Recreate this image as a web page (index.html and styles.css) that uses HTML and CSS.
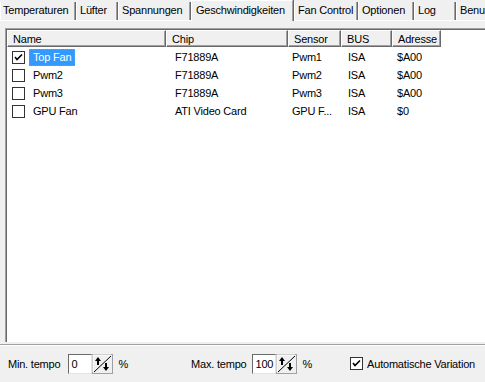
FILE: index.html
```html
<!DOCTYPE html>
<html lang="de">
<head>
    <meta charset="UTF-8">
    <title>Geschwindigkeiten</title>
    <link rel="stylesheet" href="styles.css">
</head>
<body>

    <div class="tabs">
        <div class="tab t-temp">Temperaturen</div>
        <div class="tab t-fan">Lüfter</div>
        <div class="tab t-volt">Spannungen</div>
        <div class="tab t-speed active">Geschwindigkeiten</div>
        <div class="tab t-ctrl">Fan Control</div>
        <div class="tab t-opt">Optionen</div>
        <div class="tab t-log">Log</div>
        <div class="tab t-user">Benutzer</div>
    </div>

    <div class="page">
        <!-- Fan list -->
        <div class="listview">
            <div class="header">
                <div class="col c-name">Name</div>
                <div class="col c-chip">Chip</div>
                <div class="col c-sensor">Sensor</div>
                <div class="col c-bus">BUS</div>
                <div class="col c-addr">Adresse</div>
            </div>
            <div id="rows" class="rows"></div>
        </div>

        <!-- Speed controls -->
        <div class="controls">
            <span class="lbl">Min. tempo</span>
            <div class="spin">
                <div class="spin-input">0</div>
                <svg class="spin-btn" width="21" height="20" viewBox="0 0 21 20">
                    <rect x="0.5" y="0.5" width="20" height="19" fill="#f0f0f0" stroke="#a0a0a0"/>
                    <line x1="1" y1="1" x2="19" y2="1" stroke="#fff"/>
                    <line x1="1" y1="1" x2="1" y2="18" stroke="#fff"/>
                    <line x1="2" y1="18" x2="19" y2="2" stroke="#000"/>
                    <path d="M6 3 L9 7 L7 7 L7 11 L5 11 L5 7 L3 7 Z" fill="#000"/>
                    <path d="M14 17 L17 13 L15 13 L15 9 L13 9 L13 13 L11 13 Z" fill="#000"/>
                </svg>
            </div>
            <span class="pct">%</span>

            <span class="lbl max">Max. tempo</span>
            <div class="spin">
                <div class="spin-input">100</div>
                <svg class="spin-btn" width="21" height="20" viewBox="0 0 21 20">
                    <rect x="0.5" y="0.5" width="20" height="19" fill="#f0f0f0" stroke="#a0a0a0"/>
                    <line x1="1" y1="1" x2="19" y2="1" stroke="#fff"/>
                    <line x1="1" y1="1" x2="1" y2="18" stroke="#fff"/>
                    <line x1="2" y1="18" x2="19" y2="2" stroke="#000"/>
                    <path d="M6 3 L9 7 L7 7 L7 11 L5 11 L5 7 L3 7 Z" fill="#000"/>
                    <path d="M14 17 L17 13 L15 13 L15 9 L13 9 L13 13 L11 13 Z" fill="#000"/>
                </svg>
            </div>
            <span class="pct">%</span>

            <span class="check-label">
                <svg class="box" width="13" height="13" viewBox="0 0 13 13">
                    <rect x="0.5" y="0.5" width="12" height="12" fill="#fff" stroke="#333"/>
                    <path d="M3 6 L5 8.5 L10 3.5" fill="none" stroke="#000" stroke-width="1.6"/>
                </svg>
                <span>Automatische Variation</span>
            </span>
        </div>

        <div class="debug">
            <svg class="box" width="13" height="13" viewBox="0 0 13 13">
                <rect x="0.5" y="0.5" width="12" height="12" fill="#a0a0a0" stroke="#808080"/>
            </svg>
            <span>Debug</span>
        </div>
    </div>

    <script>
        const fans = [
            { name: "Top Fan", chip: "F71889A", sensor: "Pwm1", bus: "ISA", addr: "$A00", on: true },
            { name: "Pwm2", chip: "F71889A", sensor: "Pwm2", bus: "ISA", addr: "$A00", on: false },
            { name: "Pwm3", chip: "F71889A", sensor: "Pwm3", bus: "ISA", addr: "$A00", on: false },
            { name: "GPU Fan", chip: "ATI Video Card", sensor: "GPU F...", bus: "ISA", addr: "$0", on: false },
        ];

        function checkBox(on) {
            const tick = on ? '<path d="M3 6 L5 8.5 L10 3.5" fill="none" stroke="#000" stroke-width="1.6"/>' : '';
            return `<svg class="box" width="13" height="13" viewBox="0 0 13 13">
                <rect x="0.5" y="0.5" width="12" height="12" fill="#fff" stroke="#333"/>${tick}</svg>`;
        }

        // Build the list rows
        function displayFans() {
            const rows = document.getElementById('rows');
            rows.innerHTML = '';
            fans.forEach((fan, i) => {
                rows.innerHTML += `
                    <div class="row">
                        <div class="cell c-name">${checkBox(fan.on)}<span class="${i === 0 ? 'sel' : 'txt'}">${fan.name}</span></div>
                        <div class="cell c-chip">${fan.chip}</div>
                        <div class="cell c-sensor">${fan.sensor}</div>
                        <div class="cell c-bus">${fan.bus}</div>
                        <div class="cell c-addr">${fan.addr}</div>
                    </div>
                `;
            });
        }

        displayFans();
    </script>
</body>
</html>
```

FILE: styles.css
```css
body {
    font-family: "Liberation Sans", Arial, sans-serif;
    font-size: 11px;
    letter-spacing: -0.2px;
    background-color: #f0f0f0;
    color: #000;
    margin: 0;
    width: 485px;
    height: 382px;
    overflow: hidden;
}

.tabs {
    display: flex;
    height: 21px;
    align-items: flex-end;
    white-space: nowrap;
    border-bottom: 1px solid #fff;
    box-sizing: border-box;
}

.tab {
    flex: none;
    height: 18px;
    line-height: 17px;
    padding-left: 3px;
    border-left: 1px solid #fff;
    border-right: 1px solid #a0a0a0;
    box-shadow: 1px 0 0 #696969;
    margin-right: 1px;
    box-sizing: border-box;
    overflow: hidden;
}

.t-temp { width: 75px; padding-left: 2px; }
.t-fan { width: 41px; }
.t-volt { width: 72px; }
.t-speed { width: 102px; }
.t-ctrl { width: 63px; }
.t-opt { width: 55px; }
.t-log { width: 41px; }
.t-user { width: 40px; }

.tab.active {
    height: 21px;
    line-height: 18px;
    margin-bottom: -1px;
    background-color: #f0f0f0;
    border-top: 1px solid #fff;
    padding-left: 4px;
}

.page {
    padding: 7px 0 0 5px;
}

.listview {
    width: 490px;
    height: 314px;
    background-color: #fff;
    border-top: 1px solid #a0a0a0;
    border-left: 1px solid #a0a0a0;
    box-shadow: inset 1px 1px 0 #696969;
    box-sizing: border-box;
    padding: 1px 0 0 1px;
}

.header {
    display: flex;
    height: 17px;
}

.header .col {
    height: 17px;
    line-height: 16px;
    padding-left: 5px;
    background-color: #f0f0f0;
    border-top: 1px solid #fff;
    border-left: 1px solid #fff;
    border-right: 1px solid #696969;
    border-bottom: 1px solid #696969;
    box-shadow: inset -1px -1px 0 #a0a0a0;
    box-sizing: border-box;
}

.c-name { width: 159px; }
.c-chip { width: 122px; }
.c-sensor { width: 53px; }
.c-bus { width: 51px; }
.c-addr { width: 49px; }

.rows {
    padding-top: 1px;
}

.row {
    display: flex;
    height: 18px;
    align-items: center;
}

.cell {
    padding-left: 7px;
    box-sizing: border-box;
    white-space: nowrap;
}

.row .c-chip { padding-left: 9px; }
.row .c-sensor { padding-left: 4px; }
.row .c-bus { padding-left: 7px; }
.row .c-addr { padding-left: 5px; }

.row .c-name {
    display: flex;
    align-items: center;
    padding-left: 5px;
}

.box {
    display: block;
    flex: none;
}

.sel {
    margin-left: 4px;
    padding: 2px 4px 3px 4px;
    background-color: #3399ff;
    color: #fff;
    outline: 1px dotted #e08a20;
    outline-offset: -1px;
}

.txt {
    margin-left: 8px;
}

.controls {
    display: flex;
    align-items: center;
    height: 37px;
    margin-top: 2px;
    margin-left: -5px;
    padding-left: 8px;
    border-top: 1px solid #a0a0a0;
    box-shadow: inset 0 1px 0 #fff;
    white-space: nowrap;
}

.controls > * {
    flex: none;
}

.lbl {
    margin-right: 8px;
}

.lbl.max {
    margin-left: 63px;
    margin-right: 6px;
}

.spin {
    display: flex;
    align-items: center;
}

.spin-input {
    width: 24px;
    height: 20px;
    line-height: 18px;
    padding-left: 2px;
    background-color: #fff;
    border-top: 1px solid #696969;
    border-left: 1px solid #696969;
    border-right: 1px solid #e3e3e3;
    border-bottom: 1px solid #e3e3e3;
    box-sizing: border-box;
}

.spin-btn {
    display: block;
}

.pct {
    margin-left: 5px;
}

.check-label {
    display: flex;
    align-items: center;
    gap: 4px;
    margin-left: 38px;
}

.debug {
    display: flex;
    align-items: center;
    gap: 6px;
    margin-left: 3px;
    margin-top: 1px;
}
```
